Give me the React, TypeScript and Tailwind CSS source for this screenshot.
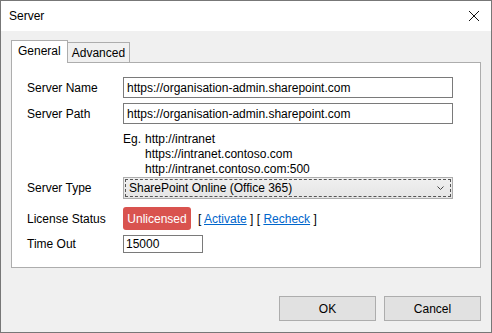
import React from "react";

const font = { fontFamily: '"Segoe UI", "Liberation Sans", Arial, sans-serif' };

function Row({ label, children }: { label: string; children: React.ReactNode }) {
  return (
    <div className="flex items-center">
      <div className="w-[96px] shrink-0">{label}</div>
      {children}
    </div>
  );
}

export default function App() {
  return (
    <div
      className="w-[492px] h-[333px] border border-[#777777] flex flex-col text-[12px] text-black bg-[#f0f0f0] overflow-hidden"
      style={font}
    >
      {/* title bar */}
      <div className="h-[30px] bg-white flex items-center justify-between pl-[8px] pr-[10px] shrink-0">
        <span className="text-[12px]">Server</span>
        <svg width="12" height="12" viewBox="0 0 12 12" className="mr-[1px]">
          <path d="M1 1 L11 11 M11 1 L1 11" stroke="#111" strokeWidth="1" />
        </svg>
      </div>

      <div className="flex-1 flex flex-col pt-[10px] px-[10px]">
        {/* tabs */}
        <div className="flex items-end h-[22px] relative z-10 -mb-px">
          <div className="h-[23px] px-[6px] bg-white border border-b-0 border-[#adadad] flex items-center leading-none pb-[2px]">
            General
          </div>
          <div className="h-[21px] px-[4px] bg-[#f0f0f0] border border-l-0 border-[#adadad] flex items-center leading-none">
            Advanced
          </div>
        </div>

        {/* panel */}
        <div className="h-[206px] bg-white border border-[#adadad] pl-[15px] pt-[14px] pr-[27px] flex flex-col">
          <Row label="Server Name">
            <div className="flex-1 h-[21px] border border-[#7a7a7a] flex items-center px-[3px]">
              https://organisation-admin.sharepoint.com
            </div>
          </Row>
          <div className="h-[5px]" />
          <Row label="Server Path">
            <div className="flex-1 h-[21px] border border-[#7a7a7a] flex items-center px-[3px]">
              https://organisation-admin.sharepoint.com
            </div>
          </Row>
          <div className="ml-[96px] mt-[8px] flex leading-[15px]">
            <span className="w-[22px]">Eg.</span>
            <div className="flex flex-col">
              <span>http://intranet</span>
              <span>https://intranet.contoso.com</span>
              <span>http://intranet.contoso.com:500</span>
            </div>
          </div>
          <Row label="Server Type">
            <div className="flex-1 h-[22px] border border-[#acacac] bg-gradient-to-b from-[#f0f0f0] to-[#e5e5e5] p-[1px] ml-0">
              <div className="h-full border border-dashed border-[#555] flex items-center justify-between pl-[3px] pr-[6px]">
                <span>SharePoint Online (Office 365)</span>
                <svg width="7" height="5" viewBox="0 0 7 5">
                  <path d="M0.5 0.5 L3.5 3.5 L6.5 0.5" stroke="#444" strokeWidth="1" fill="none" />
                </svg>
              </div>
            </div>
          </Row>
          <div className="h-[8px]" />
          <Row label="License Status">
            <div className="flex items-center">
              <div className="h-[23px] w-[68px] rounded-[3px] bg-[#d9534f] text-white flex items-center justify-center">
                Unlicensed
              </div>
              <span className="ml-[7px]">
                [ <span className="text-[#0066cc] underline">Activate</span> ] [{" "}
                <span className="text-[#0066cc] underline">Recheck</span> ]
              </span>
            </div>
          </Row>
          <div className="h-[5px]" />
          <Row label="Time Out">
            <div className="w-[80px] h-[18px] border border-[#7a7a7a] flex items-center px-[2px]">15000</div>
          </Row>
        </div>

        {/* buttons */}
        <div className="flex justify-end gap-[8px] mt-[28px]">
          <button className="w-[97px] h-[25px] border border-[#adadad] bg-[#e1e1e1] flex items-center justify-center">
            OK
          </button>
          <button className="w-[97px] h-[25px] border border-[#adadad] bg-[#e1e1e1] flex items-center justify-center">
            Cancel
          </button>
        </div>
      </div>
    </div>
  );
}
